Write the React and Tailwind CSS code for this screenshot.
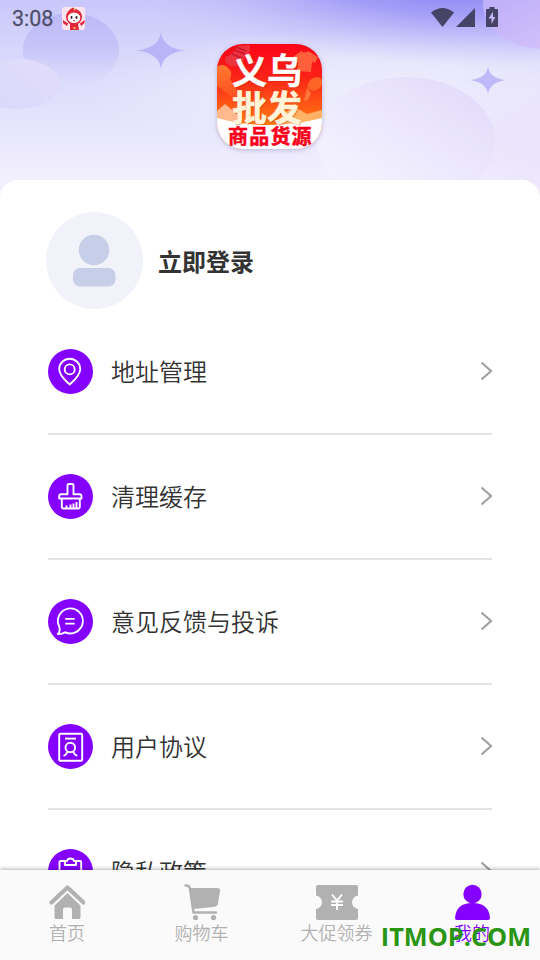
import React from "react";

const CJK = "font-['Noto_Sans_CJK_SC',sans-serif]";

function HeaderArt() {
  return (
    <svg className="absolute inset-0" width="540" height="200" viewBox="0 0 540 200" aria-hidden="true">
      <defs>
        <linearGradient id="sky" x1="0" y1="0" x2="0" y2="1">
          <stop offset="0" stopColor="#c9c7fb" />
          <stop offset=".25" stopColor="#d7d6fb" />
          <stop offset=".5" stopColor="#e1e0fc" />
          <stop offset=".9" stopColor="#f3f0fe" />
        </linearGradient>
        <radialGradient id="glow" cx="0" cy="0" r="1" gradientUnits="userSpaceOnUse" gradientTransform="translate(440 -12) rotate(3) scale(330 76)">
          <stop offset="0" stopColor="#8b84f4" />
          <stop offset=".35" stopColor="#9d97f6" stopOpacity=".85" />
          <stop offset=".7" stopColor="#b3aef8" stopOpacity=".4" />
          <stop offset="1" stopColor="#c4c0fa" stopOpacity="0" />
        </radialGradient>
        <radialGradient id="light" cx=".5" cy=".5" r=".5">
          <stop offset="0" stopColor="#f0effd" stopOpacity=".9" />
          <stop offset=".5" stopColor="#f0effd" stopOpacity=".6" />
          <stop offset="1" stopColor="#f0effd" stopOpacity="0" />
        </radialGradient>
        <linearGradient id="ballA" x1="0" y1="0" x2="0" y2="1">
          <stop offset="0" stopColor="#bcb8f7" />
          <stop offset=".5" stopColor="#c8c5f9" />
          <stop offset="1" stopColor="#dad9fc" stopOpacity=".1" />
        </linearGradient>
        <linearGradient id="ballB" x1="1" y1=".2" x2=".1" y2=".8">
          <stop offset="0" stopColor="#e2dcfa" />
          <stop offset="1" stopColor="#dad8fb" />
        </linearGradient>
        <linearGradient id="ballC" x1=".85" y1=".15" x2=".2" y2=".9">
          <stop offset="0" stopColor="#e4ddfb" />
          <stop offset=".6" stopColor="#efebfe" />
          <stop offset="1" stopColor="#f4f2fe" />
        </linearGradient>
        <linearGradient id="ballD" x1="0" y1="0" x2=".7" y2="1">
          <stop offset="0" stopColor="#b3a6f7" />
          <stop offset="1" stopColor="#d6c3fb" />
        </linearGradient>
        <radialGradient id="lilac" cx=".5" cy=".5" r=".5">
          <stop offset="0" stopColor="#ebe3fc" />
          <stop offset="1" stopColor="#ebe3fc" stopOpacity="0" />
        </radialGradient>
      </defs>
      <rect width="540" height="200" fill="url(#sky)" />
      <ellipse cx="380" cy="90" rx="300" ry="62" fill="url(#light)" />
      <ellipse cx="545" cy="150" rx="120" ry="100" fill="url(#lilac)" />
      <rect width="540" height="110" fill="url(#glow)" />
      <ellipse cx="71" cy="50" rx="48" ry="37" fill="url(#ballA)" />
      <ellipse cx="18" cy="84" rx="42" ry="25" fill="url(#ballB)" />
      <ellipse cx="406" cy="141" rx="89" ry="64" fill="url(#ballC)" />
      <ellipse cx="545" cy="5" rx="62" ry="44" fill="url(#ballD)" />
      <path d="M161 31Q162 48 185 50.500Q162.500 53 161 69Q159.500 53 136 50.500Q160 48 161 31Z" fill="#b9b4f7" />
      <path d="M488 66Q489 78.500 506 80Q490 82 488 94Q486 82 470 80Q487 78.500 488 66Z" fill="#c0b8f8" />
    </svg>
  );
}

function Mascot() {
  return (
    <svg width="23" height="23" viewBox="0 0 23 23" className="rounded-[3px] bg-[#fbe4ec]">
      <path d="M7 3L11 0.500L14 3V5H8Z" fill="#c62a35" />
      <circle cx="12" cy="10" r="8" fill="#e32539" />
      <path d="M1 13L6 16.500L5 19L1 16ZM22.500 13L18 16.500L19 19L22.500 16Z" fill="#e32539" />
      <path d="M8 17H16L17 23H8Z" fill="#e32539" />
      <ellipse cx="12" cy="10.800" rx="6.300" ry="5.300" fill="#fff" />
      <ellipse cx="9.500" cy="10.500" rx="1" ry="1.400" fill="#342026" />
      <ellipse cx="14.500" cy="10.500" rx="1" ry="1.400" fill="#342026" />
      <path d="M11 13.500Q12 14.500 13 13.500" stroke="#b72b3b" fill="none" />
      <path d="M11 2L13 1L13 4Z" fill="#f6b34c" />
      <path d="M11.500 20H13.500V22H11.500Z" fill="#f6b34c" />
    </svg>
  );
}

function StatusBar() {
  return (
    <div className="flex h-[38px] items-start pl-3 pr-[42px] pt-[7px]">
      <span className="w-[50px] font-['Roboto',sans-serif] text-[21.500px] leading-[24px] text-[#50506c] [-webkit-text-stroke:0.3px_#50506c]">3:08</span>
      <Mascot />
      <svg className="ml-auto" width="67" height="21" viewBox="431 7 67 21" fill="#454366">
        <path d="M431 12.500Q442.500 3.500 454 12.500L442.500 27Z" />
        <path d="M475 8V27H456Z" />
        <path fillRule="evenodd" d="M489.500 7H494.500V9H497Q498 9 498 10V26Q498 27 497 27H487Q486 27 486 26V10Q486 9 487 9H489.500ZM493 11.500L488.500 18.500H491.500V24L495.500 17H493Z" />
      </svg>
    </div>
  );
}

function Logo() {
  return (
    <div className={`relative ml-[217px] mt-[6px] h-[105px] w-[105px] overflow-hidden rounded-[26px] shadow-[0_1px_4px_rgba(90,80,150,0.35)] ${CJK} font-bold`}>
      <svg className="absolute inset-0" width="105" height="105" viewBox="0 0 105 105">
        <defs>
          <linearGradient id="red" x1="0" y1="0" x2="0" y2="1">
            <stop offset="0" stopColor="#fb0519" />
            <stop offset=".3" stopColor="#fb2018" />
            <stop offset=".75" stopColor="#ff7913" />
          </linearGradient>
          <linearGradient id="cloud" x1="0" y1="0" x2="0" y2="1">
            <stop offset="0" stopColor="#ff7a30" />
            <stop offset="1" stopColor="#fd4a1c" />
          </linearGradient>
        </defs>
        <rect width="105" height="105" fill="url(#red)" />
        <g opacity=".75">
          <path d="M8 13Q17 11 20 2L33 1Q34 9 27 15Q24 23 14 22Q7 20 8 13Z" fill="#e8404c" />
          <path d="M17 6L28 10M19 3L29 7M15 10L25 14" stroke="#b81c35" strokeWidth="1.500" />
        </g>
        <path d="M76 13L84 7Q88 10 91 7L101 13L98 19L95 18L94 28L80 27L81 18L78 19Z" fill="#ff5f3a" />
        <path d="M0 23Q6 18 12 25Q16 28 13 35L21 48L20 57L0 42Z" fill="url(#cloud)" />
        <ellipse cx="98" cy="40" rx="8" ry="6" transform="rotate(-35 98 40)" fill="#ff6427" />
        <path d="M90 44L94 49Q91 58 87 57Z" fill="#ff7a38" />
        <path d="M0 67L8 60L20 70V78L0 75Z" fill="#ffb98c" />
        <path d="M63 74L76 62L90 70L105 66V77L60 82Z" fill="#ffb266" />
        <path d="M0 74Q52 88 105 74V105H0Z" fill="#fff" />
      </svg>
      <div className="relative pl-[15px] pt-[6px] text-[35px] leading-[37px] text-white [-webkit-text-stroke:0.5px_currentColor] [text-shadow:1px_1px_1px_rgba(180,30,0,0.4)]">
        <div>义乌</div>
        <div className="text-[#fff3d8]">批发</div>
      </div>
      <div className="relative whitespace-nowrap pl-[11px] text-[20px] leading-[24px] tracking-[1.200px] text-[#fc0019] [-webkit-text-stroke:0.5px_#fc0019]">商品货源</div>
    </div>
  );
}

function Pin() {
  return (
    <>
      <path d="M21.700 35.500C17.500 31.500 11.200 26.500 11.200 20.200A10.500 10.500 0 0 1 32.200 20.200C32.200 26.500 26 31.500 21.700 35.500Z" />
      <circle cx="21.700" cy="20.400" r="5" />
    </>
  );
}
function Brush() {
  return (
    <>
      <path d="M19.500 20.200V11.500Q19.500 10 21 10H24Q25.500 10 25.500 11.500V20.200H31.500Q33.500 20.200 33.500 22.200V24.500H11.200V22.200Q11.200 20.200 13.200 20.200Z" />
      <path d="M13.800 24.500V33Q13.800 34.500 15.300 34.500H30.300Q31.800 34.500 31.800 33V24.500M18.500 34V31.500M22.500 34V30.500M25.500 34V29.500M28.500 34V28" />
    </>
  );
}
function Chat() {
  return (
    <>
      <path d="M9.800 35Q12.500 32.500 11.300 27.700A12.500 12.500 0 1 1 17.200 33.300Q14 35.300 9.800 35Z" />
      <path d="M17.200 19.900H26.700M17.200 24.600H26.700" />
    </>
  );
}
function Agreement() {
  return (
    <>
      <rect x="11.200" y="9.700" width="23" height="27" rx="1" />
      <path d="M17 14.600H28" />
      <circle cx="22.300" cy="23.500" r="4.800" />
      <path d="M15.500 31.800Q18.500 30.500 19.500 27.800M29.300 31.800Q26.300 30.500 25.200 27.800" />
    </>
  );
}
function Clipboard() {
  return (
    <>
      <path d="M17 12H12.500Q11.500 12 11.500 13V35H33.200V13Q33.200 12 32.200 12H28" />
      <path d="M17 16V12H19Q19.500 9.500 22.500 9.500Q25.500 9.500 26 12H28V16Z" />
    </>
  );
}

const ROWS = [
  { label: "地址管理", Icon: Pin },
  { label: "清理缓存", Icon: Brush },
  { label: "意见反馈与投诉", Icon: Chat },
  { label: "用户协议", Icon: Agreement },
  { label: "隐私政策", Icon: Clipboard },
];

function Row({ label, Icon }) {
  return (
    <li className="flex h-[125px] shrink-0 items-center border-b-2 border-[#e3e3e3]">
      <span className="h-[45px] w-[45px] rounded-full bg-[#8400ff]">
        <svg width="45" height="45" viewBox="0 0 45 45" fill="none" stroke="#fff" strokeWidth="1.900" strokeLinejoin="round">
          <Icon />
        </svg>
      </span>
      <span className="mb-px ml-[18px] text-[24px] font-[350] leading-[36px] text-[#333]">{label}</span>
      <svg className="-mr-px mb-px ml-auto" width="13" height="20" viewBox="0 0 13 20" fill="none" stroke="#a0a0a0" strokeWidth="2.200">
        <path d="M1.500 1.500L11 10L1.500 18.500" />
      </svg>
    </li>
  );
}

const TABS = [
  {
    label: "首页",
    icon: (
      <>
        <path d="M51.500 902.500L67.500 887.500L83.500 902.500" fill="none" stroke="#b1b1b1" strokeWidth="4.200" strokeLinecap="round" strokeLinejoin="round" />
        <path d="M67.500 893L80.500 905.500V917.500Q80.500 919 79 919H72V909.500Q72 907.500 70 907.500H65Q63 907.500 63 909.500V919H56Q54.500 919 54.500 917.500V905.500Z" />
      </>
    ),
    width: 36,
    box: "49 883 36 38",
  },
  {
    label: "购物车",
    icon: (
      <>
        <path d="M185.500 885.500Q189 885 190 888.500L193.500 912.500H216" fill="none" stroke="#b1b1b1" strokeWidth="2.500" strokeLinecap="round" strokeLinejoin="round" />
        <path d="M189.500 888H217.500Q220.500 888 220 891L218 903.500Q217.500 906.500 214 907L192.500 909Z" />
        <circle cx="195.500" cy="917.500" r="2.600" />
        <circle cx="213.500" cy="917.500" r="2.600" />
      </>
    ),
    width: 37,
    box: "183 883 37 38",
  },
  {
    label: "大促领券",
    icon: (
      <>
        <path d="M318 885H356Q358 885 358 887V895.500A6.800 6.800 0 0 0 358 909V918Q358 920 356 920H318Q316 920 316 918V909A6.800 6.800 0 0 0 316 895.500V887Q316 885 318 885Z" />
        <path d="M332 894.500L337 900.500L342 894.500M331 901.500H343M331 905H343M337 900.500V910" fill="none" stroke="#fff" strokeWidth="1.900" />
      </>
    ),
    width: 43,
    box: "315 883 43 38",
  },
  {
    label: "我的",
    active: true,
    icon: (
      <>
        <circle cx="472.500" cy="894" r="9.200" />
        <path d="M455 918Q456 903 472.500 903Q489 903 490 918Q490 920 488 920H457Q455 920 455 918Z" />
      </>
    ),
    width: 36,
    box: "454 883 36 38",
  },
];

function TabBar() {
  return (
    <nav className="relative grid h-[90px] grid-cols-[134px_135px_135px_136px] bg-[#fafafa] pt-[13px] shadow-[0_-1px_4px_rgba(0,0,0,0.3)]">
      {TABS.map((t) => (
        <div key={t.label} className={`flex flex-col items-center ${t.active ? "text-[#8400ff]" : "text-[#b1b1b1]"}`}>
          <svg width={t.width} height="38" viewBox={t.box} fill="currentColor">{t.icon}</svg>
          <span className="-mt-px text-[18px] font-[350] leading-[24px]">{t.label}</span>
        </div>
      ))}
      <span className="absolute bottom-[7px] right-[9px] font-['Open_Sans',sans-serif] text-[25.300px] font-bold leading-[34px] text-[#299512]">ITMOP.COM</span>
    </nav>
  );
}

export default function App() {
  return (
    <div className={`relative flex h-[960px] w-[540px] flex-col overflow-hidden bg-white ${CJK}`}>
      <HeaderArt />
      <header className="relative h-[180px] shrink-0">
        <StatusBar />
        <Logo />
      </header>
      <main className="relative h-[690px] shrink-0 overflow-hidden rounded-t-[18px] bg-white px-12">
        <section className="-ml-[2px] flex h-[130px] items-center pt-[31px]">
          <svg width="97" height="97" viewBox="0 0 97 97">
            <circle cx="48.500" cy="48.500" r="48.500" fill="#f1f2fa" />
            <circle cx="48" cy="38" r="15.200" fill="#c6cfe7" />
            <rect x="27" y="56" width="42.500" height="18.500" rx="7" fill="#c6cfe7" />
          </svg>
          <h1 className="ml-[15px] text-[24px] font-bold leading-[36px] text-[#333]">立即登录</h1>
        </section>
        <ul className="flex flex-col">
          {ROWS.map((r) => (
            <Row key={r.label} {...r} />
          ))}
        </ul>
      </main>
      <TabBar />
    </div>
  );
}
